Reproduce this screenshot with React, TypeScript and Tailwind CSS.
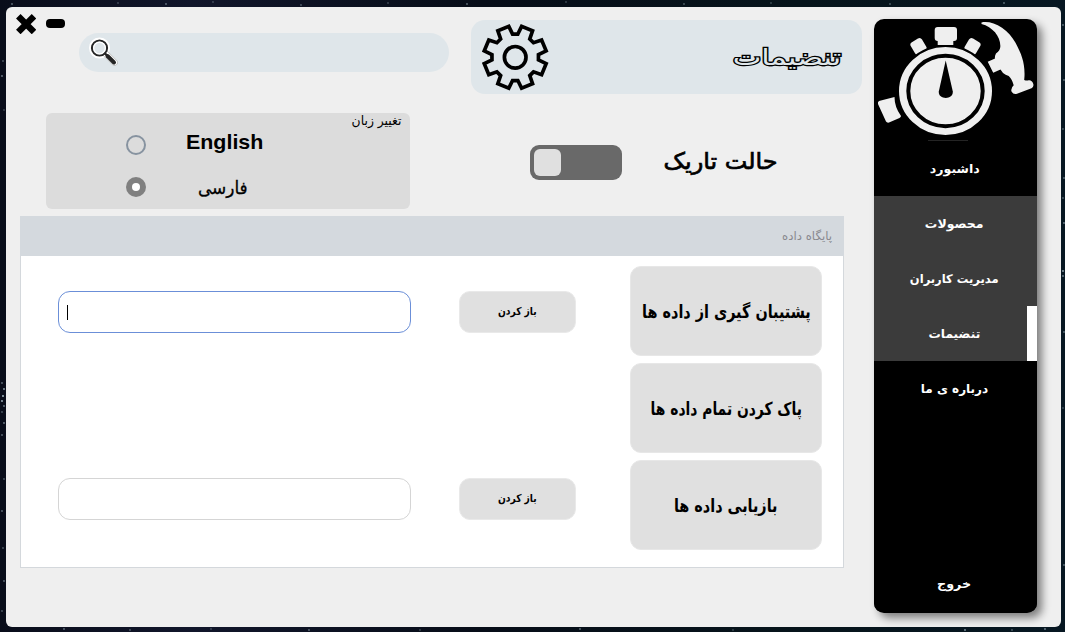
import React from "react";

const persian = "font-['DejaVu_Sans','Noto_Sans',sans-serif]";

const stars: [number, number, number][] = [
  [3, 61, 0.4], [2, 76, 0.6], [4, 110, 0.3], [12, 4, 0.5], [118, 3, 0.3], [166, 4, 0.5], [213, 2, 0.3],
  [301, 5, 0.4], [388, 3, 0.3], [467, 4, 0.5], [566, 2, 0.3], [684, 4, 0.4], [771, 3, 0.3], [890, 4, 0.4],
  [1004, 3, 0.5], [1063, 25, 0.5], [1064, 80, 0.5], [1063, 129, 0.4], [1064, 178, 0.5], [1063, 198, 0.4],
  [1064, 223, 0.6], [1063, 271, 0.8], [1063, 276, 0.6], [1064, 332, 0.5], [1063, 408, 0.3], [1064, 565, 0.5],
  [965, 630, 0.7], [1012, 630, 0.4], [1045, 629, 0.6], [733, 630, 0.3], [580, 629, 0.5], [420, 630, 0.3],
  [309, 630, 0.5], [211, 629, 0.3], [130, 630, 0.4], [64, 629, 0.5], [2, 383, 0.5], [4, 389, 0.8],
  [3, 396, 1], [2, 401, 0.9], [4, 406, 0.6], [2, 412, 0.4], [4, 423, 0.6], [2, 435, 0.5], [4, 479, 0.4],
  [2, 511, 0.5], [3, 548, 0.4], [4, 581, 0.5], [2, 611, 0.4],
];

function NightSky() {
  return (
    <svg className="absolute inset-0" width="1065" height="632">
      {stars.map(([x, y, o], i) => (
        <circle key={i} cx={x} cy={y} r="0.9" fill="#b8ccd6" opacity={o} />
      ))}
    </svg>
  );
}

function Gear() {
  const pts: string[] = [];
  for (let i = 0; i < 8; i++) {
    const c = i * 45 + 22.5;
    const add = (deg: number, r: number) => {
      const a = (deg * Math.PI) / 180;
      pts.push(`${(34.2 + r * Math.sin(a)).toFixed(2)},${(34.3 - r * Math.cos(a)).toFixed(2)}`);
    };
    add(c - 16, 23.4);
    add(c - 10.8, 31.6);
    add(c + 10.8, 31.6);
    add(c + 16, 23.4);
  }
  return (
    <svg width="69" height="69" viewBox="0 0 69 69" fill="none" stroke="#000" strokeWidth="3.7">
      <polygon points={pts.join(" ")} />
      <circle cx="34.2" cy="34.3" r="10.8" />
    </svg>
  );
}

function Search() {
  return (
    <svg width="30" height="30" viewBox="0 0 30 30" fill="none" strokeLinecap="round">
      <circle cx="10.5" cy="11" r="8" stroke="#fff" strokeWidth="5" />
      <path d="M17 17L25.5 25.5" stroke="#aaa" strokeWidth="6.4" />
      <path d="M17 17L25.5 25.5" stroke="#fff" strokeWidth="5.4" />
      <circle cx="10.5" cy="11" r="7.6" fill="#dfe6ea" stroke="#252525" strokeWidth="2" />
      <circle cx="10.5" cy="11" r="5.8" stroke="#fff" strokeWidth="1.2" />
      <path d="M16 16.5L18.5 19" stroke="#252525" strokeWidth="2.4" />
      <path d="M18.5 19L25 25.5" stroke="#252525" strokeWidth="4" />
    </svg>
  );
}

function Logo() {
  return (
    <svg width="163" height="122" viewBox="0 0 163 122" fill="#efefef">
      <rect x="60.7" y="8" width="22.3" height="14" rx="3" />
      <path d="M63.7 18h15.6v8H63.7z" />
      <rect x="-6.5" y="-6" width="13" height="14" rx="3" transform="translate(44 26.5) rotate(-31)" />
      <rect x="-6.5" y="-6" width="13" height="14" rx="3" transform="translate(99 26.5) rotate(31)" />
      <ellipse cx="71.5" cy="72" rx="47.5" ry="45" stroke="#000" strokeWidth="2" />
      <ellipse cx="71.5" cy="72" rx="37.2" ry="35.2" stroke="#000" strokeWidth="4" />
      <path d="M71.7 41.5L78.8 72.5C79.5 81 64 81 64.8 72.5Z" fill="#000" />
      <path d="M5 82L20.5 78Q20.5 88 27 97Q27 98 25.5 99L15 103.5Q13 104 12 102.5L4 85Q3.5 83 5 82Z" />
      <path d="M107.5 3.500C113 2 121 4 128 8.7C134 13 138 17.5 141.5 23.7C147 34 151 43 150.5 57L150.2 61Q152.5 62 154.7 61.3Q158 61 159.3 65Q160 67.8 157.5 69.2L143 74.8Q139.5 76 137.5 72.5Q136.5 69 139.7 66.3Q138 60 134.7 57Q131.5 56 129 54L126.5 50.5L119.2 53.7L113.7 42.7L121 39.5Q120.5 37 122 34.5Q126 31.5 126.3 28C127 18 119 8 107.5 5Z" />
      <path d="M54 121.5H94" stroke="#333" strokeWidth=".7" />
    </svg>
  );
}

function NavItem({ label, active, lit, width }: { label: string; active?: boolean; lit?: boolean; width: string }) {
  return (
    <button
      className={`relative flex h-[55px] w-full items-center justify-center pr-[2px] text-[12px] font-bold text-white ${lit ? "bg-[#3b3b3b]" : "bg-black"}`}
    >
      <span className={`whitespace-nowrap ${width}`}>{label}</span>
      {active && <span className="absolute top-0 right-0 h-full w-[10px] bg-white" />}
    </button>
  );
}

function ActionCard({ label, width }: { label: string; width: string }) {
  return (
    <button className="flex h-[90px] w-[192px] items-center justify-center rounded-[11px] border border-[#e7e7e7] bg-[#e0e0e0] text-[18px] font-bold text-black">
      <span className={`whitespace-nowrap ${width}`}>{label}</span>
    </button>
  );
}

function FileRow({ focused }: { focused?: boolean }) {
  return (
    <div className="flex h-[42px] items-center gap-[48px]">
      <div
        className={`flex h-[42px] w-[353px] items-center rounded-[12px] border bg-white pl-[8px] ${focused ? "border-[#6b8fd8]" : "border-[#d5d5d5]"}`}
      >
        {focused && <span className="h-[15px] w-px bg-black" />}
      </div>
      <button className="flex h-[42px] w-[117px] items-center justify-center rounded-[11px] border border-[#e9e9e9] bg-[#e0e0e0] text-[11px] font-bold text-black">
        <span className="scale-x-[.83] whitespace-nowrap">باز کردن</span>
      </button>
    </div>
  );
}

export default function App() {
  return (
    <div
      className={`relative h-[632px] w-[1065px] overflow-hidden bg-[linear-gradient(90deg,#090d1a_0%,#11162b_18%,#070d18_45%,#06141b_75%,#071722_100%)] pt-[7px] pl-[6px] ${persian}`}
    >
      <NightSky />
      <div dir="ltr" className="relative flex h-[620px] w-[1055px] rounded-[6px] bg-[#efefef]">
        <main className="w-[868px] shrink-0">
          <header className="flex h-[106px] items-start">
            <div className="flex w-[73px] items-start pt-[7px] pl-[10px]">
              <svg width="20" height="20" viewBox="0 0 20 20" stroke="#000" strokeWidth="6.4">
                <path d="M2.3 2.3L18 18M18 2.3L2.3 18" />
              </svg>
              <span className="mt-[5px] ml-[10px] h-[9px] w-[19px] rounded-[4px] bg-black" />
            </div>
            <div className="mt-[26px] h-[39px] w-[370px] rounded-full bg-[#dfe6ea] pt-[4px] pl-[10px]">
              <Search />
            </div>
            <div className="mt-[13px] ml-[22px] flex h-[74px] w-[391px] items-center justify-between rounded-[14px] bg-[#dfe6ea] pr-[21px] pl-[10px]">
              <Gear />
              <h1
                dir="rtl"
                className="origin-right scale-x-[1.32] text-[23px] font-normal whitespace-nowrap text-[#dfe6ea] [-webkit-text-stroke:2.4px_#000] [paint-order:stroke_fill]"
              >
                تنضیمات
              </h1>
            </div>
          </header>

          <section className="flex h-[103px] items-start pl-[40px]">
            <div className="flex h-[96px] w-[364px] justify-between rounded-[6px] bg-[#dcdcdc]">
              <div className="flex flex-col gap-[18px] pt-[17px] pl-[80px]">
                <label className="flex h-[25px] items-center">
                  <span className="mt-[5px] h-[20px] w-[20px] rounded-full border-2 border-[#8793a0]" />
                  <span className="mb-[2px] ml-[40px] origin-left scale-x-[1.02] font-['Liberation_Sans',sans-serif] text-[21px] font-bold text-black">English</span>
                </label>
                <label className="flex h-[25px] items-center">
                  <span className="mt-[2px] flex h-[20px] w-[20px] items-center justify-center rounded-full bg-[#808080]">
                    <span className="h-[8px] w-[8px] rounded-full bg-white" />
                  </span>
                  <span className="mt-[3px] ml-[52px] origin-left scale-x-[.94] text-[18px] text-black [-webkit-text-stroke:0.3px_#000]">فارسی</span>
                </label>
              </div>
              <span dir="rtl" className="mr-[9px] origin-right scale-x-[.95] text-[13px] leading-[16px] whitespace-nowrap text-black">تغییر زبان</span>
            </div>
            <div className="mt-[32px] ml-[120px] h-[35px] w-[92px] rounded-[9px] bg-[#696969] p-[4px]">
              <div className="h-[27px] w-[27px] rounded-[6px] bg-[#e0e0e0]" />
            </div>
            <div dir="rtl" className="mt-[30px] ml-[42px] flex h-[36px] w-[114px] items-center justify-start text-[23px] text-black">
              <span className="origin-right scale-x-[1.04] whitespace-nowrap [-webkit-text-stroke:0.7px_#000]">حالت تاریک</span>
            </div>
          </section>

          <section className="ml-[14px] h-[352px] w-[824px] border border-[#d4d8dc] bg-white">
            <div dir="rtl" className="-mx-px -mt-px flex h-[40px] items-center bg-[#d4d9de] pr-[12px] text-[12px] text-[#89898f]">
              <span className="origin-right scale-x-[.98] whitespace-nowrap">پایگاه داده</span>
            </div>
            <div className="flex pl-[37px]">
              <div className="flex flex-col gap-[145px] pt-[35px]">
                <FileRow focused />
                <FileRow />
              </div>
              <div dir="rtl" className="ml-[54px] flex flex-col gap-[7px] pt-[10px]">
                <ActionCard label="پشتیبان گیری از داده ها" width="scale-x-[.8]" />
                <ActionCard label="پاک کردن تمام داده ها" width="scale-x-[.77]" />
                <ActionCard label="بازیابی داده ها" width="scale-x-[.8]" />
              </div>
            </div>
          </section>
        </main>

        <aside
          dir="rtl"
          className="mt-[12px] flex h-[594px] w-[163px] shrink-0 flex-col overflow-hidden rounded-[10px] bg-black shadow-[5px_5px_8px_rgba(0,0,0,0.48)]"
        >
          <div className="h-[122px] shrink-0"><Logo /></div>
          <nav className="flex grow flex-col">
            <NavItem label="داشبورد" width="scale-x-[1.05]" />
            <NavItem label="محصولات" lit width="scale-x-[1.04]" />
            <NavItem label="مدیریت کاربران" lit width="scale-x-[.96]" />
            <NavItem label="تنضیمات" lit active width="scale-x-[1.02]" />
            <NavItem label="درباره ی ما" width="scale-x-[1]" />
            <div className="grow" />
            <NavItem label="خروج" width="scale-x-[1.06]" />
            <div className="h-[2px]" />
          </nav>
        </aside>
      </div>
    </div>
  );
}
